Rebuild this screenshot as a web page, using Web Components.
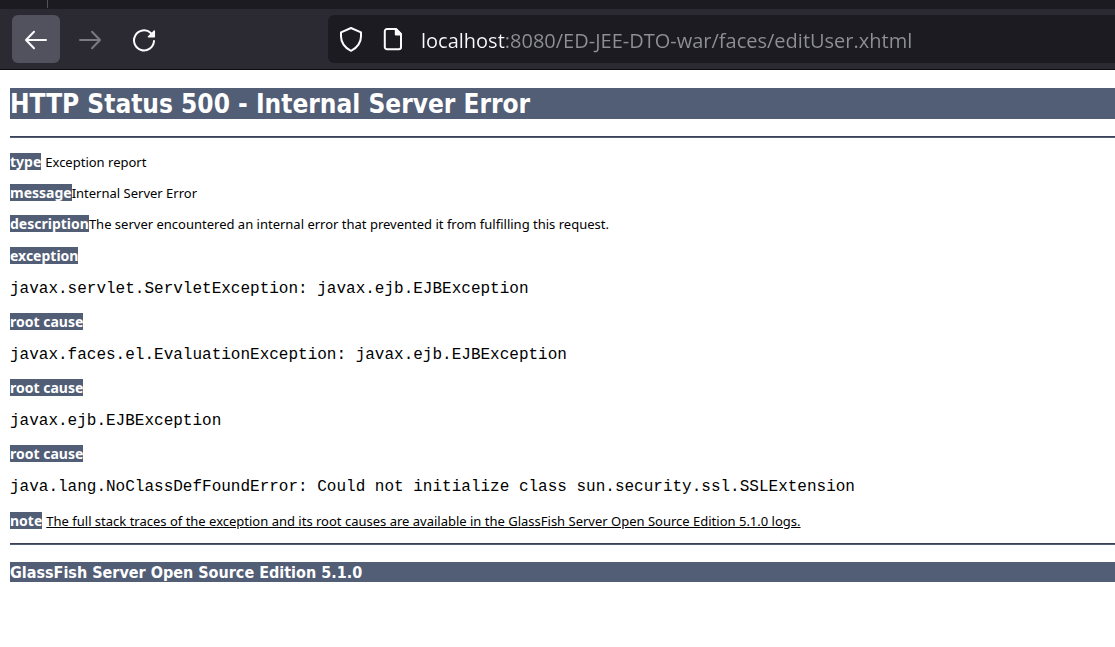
<!DOCTYPE html>
<html lang="en">
<head>
<meta charset="utf-8">
<title>HTTP Status 500 - Internal Server Error</title>
<style>
  body { margin: 0; background: #fff; color: #000; font-family: "Noto Sans", sans-serif; }
</style>
</head>
<body>
<browser-toolbar url="localhost:8080/ED-JEE-DTO-war/faces/editUser.xhtml"></browser-toolbar>
<error-report>
  <span slot="title">HTTP Status 500 - Internal Server Error</span>
  <report-field slot="facts" label="type" spaced>Exception report</report-field>
  <report-field slot="facts" label="message">Internal Server Error</report-field>
  <report-field slot="facts" label="description">The server encountered an internal error that prevented it from fulfilling this request.</report-field>
  <stack-trace slot="traces" label="exception">javax.servlet.ServletException: javax.ejb.EJBException</stack-trace>
  <stack-trace slot="traces" label="root cause">javax.faces.el.EvaluationException: javax.ejb.EJBException</stack-trace>
  <stack-trace slot="traces" label="root cause">javax.ejb.EJBException</stack-trace>
  <stack-trace slot="traces" label="root cause">java.lang.NoClassDefFoundError: Could not initialize class sun.security.ssl.SSLExtension</stack-trace>
  <report-field slot="note" label="note" spaced><u>The full stack traces of the exception and its root causes are available in the GlassFish Server Open Source Edition 5.1.0 logs.</u></report-field>
  <span slot="product">GlassFish Server Open Source Edition 5.1.0</span>
</error-report>

<script>
class BrowserToolbar extends HTMLElement {
  connectedCallback() {
    this.attachShadow({ mode: "open" }).innerHTML = `
      <style>
        :host { display: block; background: #2b2a33; border-bottom: 1px solid #0c0c0d; }
        .tabs { height: 9px; background: #1c1b22; }
        .tabs i { display: block; width: 47px; height: 8px; border-right: 1px solid #53525c; }
        nav { display: flex; align-items: center; padding: 6px 0 6px 12px; }
        button { display: grid; place-items: center; width: 48px; height: 48px; margin: 0 6px 0 0; padding: 0;
          border: 0; border-radius: 6px; background: none; color: #fbfbfe; }
        button.back { background: #52525e; }
        button:disabled { color: #7b7a82; }
        svg { display: block; fill: none; stroke: currentColor; stroke-width: 2; stroke-linecap: round; stroke-linejoin: round; }
        label { flex: 1; display: flex; align-items: center; gap: 18px; height: 48px; margin-left: 154px; padding-left: 11px;
          border-radius: 6px 0 0 6px; background: #1c1b22; color: #fbfbfe; }
        input { flex: 1; min-width: 0; height: 32px; box-sizing: content-box; margin: 0; padding: 4px 0 0; border: 0; outline: 0;
          font: 20px/32px "Open Sans", "Noto Sans", sans-serif;
          background: linear-gradient(to right, #fbfbfe 84px, #8f8f96 84px); -webkit-background-clip: text; background-clip: text;
          -webkit-text-fill-color: transparent; color: #8f8f96; }
      </style>
      <div class="tabs"><i></i></div>
      <nav aria-label="Navigation">
        <button class="back" aria-label="Back"><svg width="24" height="24" viewBox="0 0 24 24"><path d="M22 13H2.500M10 4.800 2 13l8 8.200"/></svg></button>
        <button aria-label="Forward" disabled><svg width="24" height="24" viewBox="0 0 24 24"><path d="M2 13H21.500M14 4.800 22 13l-8 8.200"/></svg></button>
        <button aria-label="Reload"><svg width="24" height="26" viewBox="0 0 24 26"><path d="M22 15A10 10 0 1 1 18.800 7"/><path d="M22.300 5v5.800h-5.800z" fill="currentColor" stroke-width="1.500"/></svg></button>
        <label>
          <svg width="24" height="26" viewBox="0 0 24 26"><path d="M12 2 22 6.300v4.200c0 5.500-3.500 11.500-10 14.300C5.500 22 2 16 2 10.500V6.300z"/></svg>
          <svg width="22" height="24" viewBox="0 0 22 24"><path d="M6 2h9l5 5v13a2.200 2.200 0 0 1-2.200 2.200H6A2.200 2.200 0 0 1 3.800 20V4.200A2.200 2.200 0 0 1 6 2z"/><path d="M14.800 2v5.500H20z" fill="currentColor"/></svg>
          <input type="text" aria-label="Address" spellcheck="false">
        </label>
      </nav>`;
    this.shadowRoot.querySelector("input").value = this.getAttribute("url");
  }
}

class ErrorReport extends HTMLElement {
  connectedCallback() {
    this.attachShadow({ mode: "open" }).innerHTML = `
      <style>
        :host { display: block; padding: 18px 0 16px 10px; }
        h1, h3 { margin: 0; padding-top: 2px; background: #525d76; color: #fff; font-family: "DejaVu Sans Condensed", "DejaVu Sans", sans-serif; font-weight: bold; }
        h1 { font-size: 26px; line-height: 29px; }
        h3 { font-size: 16px; line-height: 18px; }
        hr { height: 1px; margin: 17px 0 15px; border: 0; border-top: 1px solid #3a4254; background: #525d76; }
        .facts { display: grid; gap: 14px; }
        .traces { display: grid; gap: 15px; margin: 15px 0 16px; }
        .end { margin: 14px 0 17px; }
      </style>
      <h1><slot name="title"></slot></h1>
      <hr>
      <div class="facts"><slot name="facts"></slot></div>
      <div class="traces"><slot name="traces"></slot></div>
      <slot name="note"></slot>
      <hr class="end">
      <h3><slot name="product"></slot></h3>`;
  }
}

const labelStyle = `
  b { display: inline-block; height: 17px; background: #525d76; color: #fff; font-size: 14px; line-height: 17px; }`;

class ReportField extends HTMLElement {
  connectedCallback() {
    this.attachShadow({ mode: "open" }).innerHTML = `
      <style>
        :host { display: flex; align-items: baseline; height: 17px; font-size: 13px; line-height: 17px; }
        :host([spaced]) { gap: 4px; }
        ${labelStyle}
      </style>
      <b></b><span><slot></slot></span>`;
    this.shadowRoot.querySelector("b").textContent = this.getAttribute("label");
  }
}

class StackTrace extends HTMLElement {
  connectedCallback() {
    this.attachShadow({ mode: "open" }).innerHTML = `
      <style>
        :host { display: grid; justify-items: start; gap: 16px; }
        pre { margin: 0; font: 16px/18px "Liberation Mono", monospace; }
        ${labelStyle}
      </style>
      <b></b><pre><slot></slot></pre>`;
    this.shadowRoot.querySelector("b").textContent = this.getAttribute("label");
  }
}

customElements.define("browser-toolbar", BrowserToolbar);
customElements.define("error-report", ErrorReport);
customElements.define("report-field", ReportField);
customElements.define("stack-trace", StackTrace);
</script>
</body>
</html>
